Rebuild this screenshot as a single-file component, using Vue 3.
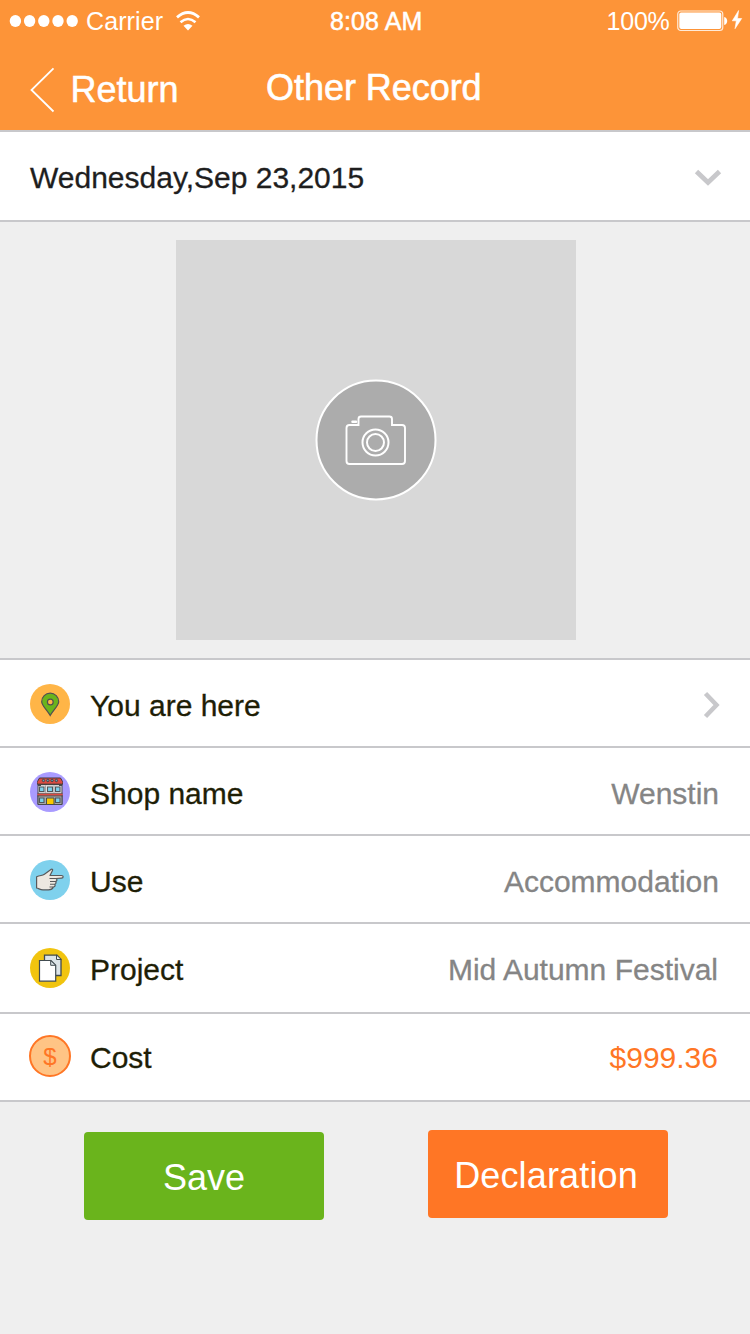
<script setup>
const rows = [
  { id: 'place', label: 'You are here', value: '' },
  { id: 'shop', label: 'Shop name', value: 'Wenstin' },
  { id: 'use', label: 'Use', value: 'Accommodation' },
  { id: 'project', label: 'Project', value: 'Mid Autumn Festival' },
  { id: 'cost', label: 'Cost', value: '$999.36' },
]
</script>

<template>
  <main class="screen">
    <header class="header">
      <div class="status">
        <div class="status-left">
          <svg class="dots" width="70" height="14" viewBox="0 0 70 14" fill="#fff">
            <ellipse v-for="n in 5" :key="n" :cx="6.4 + (n - 1) * 14.2" cy="7" rx="5.7" ry="6" />
          </svg>
          <span class="carrier">Carrier</span>
          <svg class="wifi" width="24" height="20" viewBox="0 0 24 20">
            <path d="M1 6.4Q12-3.4 23 6.4" fill="none" stroke="#fff" stroke-width="2.8" />
            <path d="M4.500 11.200Q12 4.800 19.500 11.200" fill="none" stroke="#fff" stroke-width="2.6" />
            <path d="M7.500 14.800Q12 11 16.500 14.800L12 19.500Z" fill="#fff" />
          </svg>
        </div>
        <span class="clock">8:08 AM</span>
        <div class="status-right">
          <span class="percent">100%</span>
          <svg class="battery" width="66" height="22" viewBox="0 0 66 22">
            <rect x=".75" y="1" width="45" height="19.5" rx="3" fill="none" stroke="#fff" stroke-opacity=".8" stroke-width="1.2" />
            <rect x="2.3" y="2.6" width="42" height="16.3" rx="1.8" fill="#fff" />
            <path d="M47.2 7v8c4-1 4-7 0-8" fill="#fff" />
            <path d="M61.600.5 55.300 10.800h4L58 18.700 64.700 8.500h-4.200Z" fill="#fff" stroke="#fff" stroke-width=".6" />
          </svg>
        </div>
      </div>
      <div class="nav">
        <svg class="back" width="26" height="46" viewBox="0 0 26 46">
          <path d="M23.5 1.3 1.5 23l22 21.5" fill="none" stroke="#fff" stroke-width="1.8" />
        </svg>
        <span class="return">Return</span>
        <h1 class="title">Other Record</h1>
      </div>
    </header>

    <section class="date-row">
      <span class="date">Wednesday,Sep 23,2015</span>
      <svg class="down" width="28" height="20" viewBox="0 0 28 20">
        <path d="M2.5 3.5 14 14.5 25.5 3.5" fill="none" stroke="#c8c8cb" stroke-width="4.8" />
      </svg>
    </section>

    <section class="photo-area">
      <div class="photo">
        <svg width="122" height="122" viewBox="0 0 122 122" fill="none" stroke="#fff">
          <circle cx="61" cy="61" r="59.5" fill="#acacac" stroke-width="2" />
          <path d="M34.500 46H43.500V40a2.500 2.500 0 0 1 2.500-2.500H74.500A2.500 2.500 0 0 1 77 40V46H87a3 3 0 0 1 3 3V82a3 3 0 0 1-3 3H34.500a3 3 0 0 1-3-3V49a3 3 0 0 1 3-3Z" stroke-width="1.900" />
          <circle cx="60.500" cy="63.500" r="13" stroke-width="2" />
          <circle cx="60.500" cy="63.500" r="8.500" stroke-width="2" />
          <path d="M37.500 42.700h3.500" stroke-width="2.500" stroke-linecap="round" />
        </svg>
      </div>
    </section>

    <section class="list">
      <div v-for="row in rows" :key="row.id" class="row" :class="row.id">
        <div class="icon">
          <svg v-if="row.id === 'place'" width="42" height="42" viewBox="0 0 42 42">
            <circle cx="21" cy="21" r="20" fill="#ffb547" />
            <path d="M21.200 32.500C18 27 12.700 22.500 12.700 18.700a8.500 8.500 0 0 1 17 0C29.700 22.500 24.400 27 21.200 32.500Z" fill="#6ab41c" stroke="#505050" stroke-width="1.200" />
            <circle cx="21.300" cy="19" r="2.900" fill="#ffb547" stroke="#505050" stroke-width="1.200" />
          </svg>

          <svg v-else-if="row.id === 'shop'" width="42" height="42" viewBox="0 0 42 42">
            <circle cx="21" cy="21" r="20" fill="#a99bff" />
            <path d="M9 12.500h24V33.500H9Z" fill="#e6e7e8" stroke="#494c4d" />
            <path d="M9 24h24v9.500H9Z" fill="#a8a8a8" stroke="#494c4d" />
            <path d="M9 14h3M30 14h3" stroke="#494c4d" stroke-width="2" />
            <path d="M10.500 7h21l2 3.500V13h-25v-2.500Z" fill="#dc4c42" stroke="#423838" />
            <path d="M8.500 11.700h25" stroke="#dc4c42" stroke-width="1.500" />
            <path d="M8.500 13.500h25" stroke="#494040" stroke-width="1.200" />
            <g fill="#6f9fae" stroke="#3f3b42" stroke-width=".9">
              <circle v-for="x in [14.5, 18.8, 23.1, 27.4]" :key="x" :cx="x" cy="9.5" r="1.2" />
            </g>
            <path d="M8.500 23.500h25" stroke="#dc4c42" stroke-width="2" />
            <path d="M8.500 22.300h25M8.500 25h25" stroke="#494040" stroke-width=".7" />
            <g fill="#7bd1ed" stroke="#50565a" stroke-width="1.100">
              <path d="M10.500 16h4.500v4.500h-4.500ZM18.500 16H23.500v4.500h-5ZM26.500 16H31v4.500h-4.500ZM10.500 27H15v4.500h-4.500ZM26.500 27H31v4.500h-4.500Z" />
            </g>
            <path d="M17.500 27h7.500v6.500h-7.500Z" fill="#fbc900" stroke="#494c4d" />
            <path d="M16.500 14.500v7M25 14.500v7" stroke="#777" stroke-width=".6" />
          </svg>

          <svg v-else-if="row.id === 'use'" width="42" height="42" viewBox="0 0 42 42">
            <circle cx="21" cy="21" r="20" fill="#7fd1ed" />
            <path d="M7.600 17.800C11.500 16 13 17 15.400 15.300L22.300 10.200c1-.5 1.700.3 1.200 1.300L21 16.500H32.500c2.200 0 2.200 2.500 0 2.600L27 19.500c1.500.8 1.200 2.500-.5 3 1 .8.500 2.400-.8 2.800 1 1.400 0 2.700-1.400 2.700C23.600 30 22 30.800 19.500 30.800H14c-3 0-4-1.300-6.400-1.800Z" fill="#ede8e1" stroke="#58595b" stroke-width="1.200" stroke-linejoin="round" />
            <path d="M20.500 19.500H27M21 22.500h5.500M21 25.300h4.700M20.500 28h3.800" fill="none" stroke="#58595b" stroke-width="1.100" />
          </svg>

          <svg v-else-if="row.id === 'project'" width="42" height="42" viewBox="0 0 42 42">
            <circle cx="21" cy="21" r="20" fill="#f1c40f" />
            <path d="M15.500 8.200H28L32 12.200V28.500H15.500Z" fill="#dce4e8" stroke="#414b50" stroke-width="1.300" />
            <path d="M27.500 8v4.500h4.800Z" fill="#f0f4f5" stroke="#414b50" />
            <path d="M10.500 13.500h11.500l4.700 4.700V34.200H10.500Z" fill="#fff" stroke="#414b50" stroke-width="1.200" />
            <path d="M21.700 13.500v4.800h5Z" fill="#dce4e8" stroke="#414b50" />
          </svg>

          <div v-else class="coin">$</div>
        </div>
        <span class="label">{{ row.label }}</span>
        <span v-if="row.value" class="value">{{ row.value }}</span>
        <svg v-else class="next" width="20" height="28" viewBox="0 0 20 28">
          <path d="M3.500 2.500 14.500 14 3.500 25.500" fill="none" stroke="#c8c8cb" stroke-width="4.500" />
        </svg>
      </div>
    </section>

    <footer class="actions">
      <button class="save"><span>Save</span></button>
      <button class="declare"><span>Declaration</span></button>
    </footer>
  </main>
</template>

<style>
body { margin: 0; background: #efefef; }
</style>

<style scoped>
* { box-sizing: border-box; }
.screen {
  width: 750px;
  height: 1334px;
  overflow: hidden;
  background: #efefef;
  font-family: "Liberation Sans", Arial, sans-serif;
  font-size: 30px;
  color: #1e1e06;
}
svg { display: block; flex: none; }
span { white-space: nowrap; }
.header { height: 132px; background: #fd9438; border-bottom: 2px solid #c8c8cb; color: #fff; }
.status {
  display: grid;
  grid-template-columns: 330px 1fr 144px;
  height: 42px;
  line-height: 42px;
  font-size: 25px;
}
.status-left { display: flex; align-items: center; padding-left: 9px; }
.carrier { margin-left: 7px; letter-spacing: .1px; }
.wifi { margin-left: 13px; }
.clock { letter-spacing: .1px; -webkit-text-stroke: .5px #fff; }
.status-right { display: flex; align-items: center; }
.percent { letter-spacing: -.2px; margin-left: .5px; }
.battery { margin-left: auto; margin-right: 7px; }
.nav { display: flex; height: 88px; }
.back { margin: 25px 0 0 29.5px; }
.return { margin-left: 15px; font-size: 36px; line-height: 96px; -webkit-text-stroke: .5px #fff; }
.title {
  margin: 0 0 0 87.5px;
  font-size: 36px;
  font-weight: 400;
  line-height: 92px;
  letter-spacing: -.05px;
  -webkit-text-stroke: .6px #fff;
}
.date-row {
  display: flex;
  justify-content: space-between;
  height: 90px;
  padding: 0 28px 0 30px;
  border-bottom: 2px solid #c8c8cb;
  background: #fff;
}
.date { line-height: 92px; color: #1e1e1e; -webkit-text-stroke: .3px #1e1e1e; }
.down { margin-top: 36px; }
.photo-area { display: flex; justify-content: center; height: 438px; padding: 18px 0 0 2px; border-bottom: 2px solid #c8c8cb; }
.photo { display: flex; align-items: center; justify-content: center; width: 400px; height: 400px; background: #d8d8d8; }
.row {
  display: flex;
  height: 88px;
  padding: 0 31px 0 29px;
  border-bottom: 2px solid #c8c8cb;
  background: #fff;
  line-height: 92px;
}
.project { height: 90px; }
.cost { line-height: 88px; }
.icon { width: 42px; height: 42px; margin-top: 23px; }
.cost .icon { margin-top: 21px; }
.coin {
  width: 42px;
  height: 42px;
  border: 2px solid #ff7625;
  border-radius: 50%;
  background: #ffc485;
  color: #ff7625;
  font-size: 24px;
  line-height: 39px;
  text-align: center;
}
.label { margin-left: 19px; -webkit-text-stroke: .3px #1e1e06; }
.value { margin-left: auto; color: #858585; -webkit-text-stroke: .3px #858585; }
.project .value, .cost .value { margin-right: 1px; }
.cost .value { color: #ff7625; -webkit-text-stroke: 0; }
.next { margin: 31px -3px 0 auto; }
.actions { display: flex; align-items: flex-start; padding: 28px 82px 0 84px; }
button {
  width: 240px;
  height: 88px;
  padding: 0;
  border: 0;
  border-radius: 4px;
  color: #fff;
  font: 36px/92px "Liberation Sans", Arial, sans-serif;
}
.save { margin-top: 2px; background: #6ab41c; }
.declare { margin-left: auto; padding-right: 4px; background: #ff7625; letter-spacing: .15px; }
</style>
